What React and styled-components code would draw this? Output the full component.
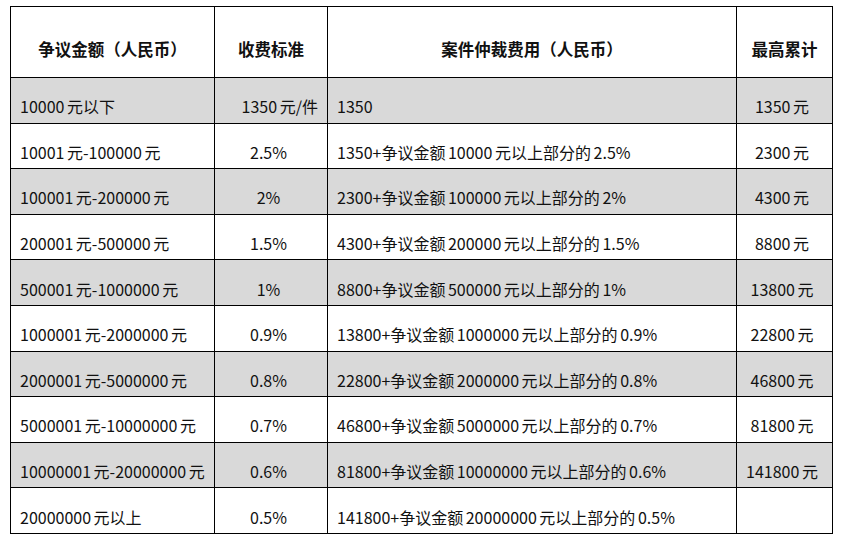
import React from "react";
import styled, { createGlobalStyle } from "styled-components";

const Global = createGlobalStyle`
  html, body { margin: 0; padding: 0; background: #ffffff; }
  body { font-family: "Noto Sans CJK SC", "Noto Sans", sans-serif; color: #111; }
`;

const Page = styled.div`
  padding: 6px 0 0 10px;
`;

const Table = styled.table`
  border-collapse: collapse;
  table-layout: fixed;
  width: 822px;
  font-size: 16px;
  line-height: 20px;
`;

const HeadRow = styled.tr`
  height: 71px;
`;

const Row = styled.tr`
  height: 45.6px;
  background: ${(p) => (p.$shaded ? "#d9d9d9" : "#ffffff")};
`;

const Th = styled.th`
  border: 1px solid #000;
  font-weight: 700;
  font-size: 16.5px;
  text-align: center;
  padding: 13px 4px 0;
  vertical-align: middle;
  white-space: nowrap;
`;

const Td = styled.td`
  border: 1px solid #000;
  font-weight: 400;
  word-spacing: -1px;
  text-align: ${(p) => p.$align || "left"};
  padding: 12px ${(p) => (p.$align === "left" ? "4px" : "9px")} 0
    ${(p) => (p.$align === "left" ? "9px" : "4px")};
  vertical-align: middle;
  white-space: nowrap;
`;

const rows = [
  ["10000 元以下", "1350 元/件", "1350", "1350 元", "right"],
  ["10001 元-100000 元", "2.5%", "1350+争议金额 10000 元以上部分的 2.5%", "2300 元"],
  ["100001 元-200000 元", "2%", "2300+争议金额 100000 元以上部分的 2%", "4300 元"],
  ["200001 元-500000 元", "1.5%", "4300+争议金额 200000 元以上部分的 1.5%", "8800 元"],
  ["500001 元-1000000 元", "1%", "8800+争议金额 500000 元以上部分的 1%", "13800 元"],
  ["1000001 元-2000000 元", "0.9%", "13800+争议金额 1000000 元以上部分的 0.9%", "22800 元"],
  ["2000001 元-5000000 元", "0.8%", "22800+争议金额 2000000 元以上部分的 0.8%", "46800 元"],
  ["5000001 元-10000000 元", "0.7%", "46800+争议金额 5000000 元以上部分的 0.7%", "81800 元"],
  ["10000001 元-20000000 元", "0.6%", "81800+争议金额 10000000 元以上部分的 0.6%", "141800 元"],
  ["20000000 元以上", "0.5%", "141800+争议金额 20000000 元以上部分的 0.5%", ""],
];

export default function App() {
  return (
    <Page>
      <Global />
      <Table>
        <colgroup>
          <col style={{ width: 204 }} />
          <col style={{ width: 113 }} />
          <col style={{ width: 409 }} />
          <col style={{ width: 96 }} />
        </colgroup>
        <thead>
          <HeadRow>
            <Th>争议金额（人民币）</Th>
            <Th>收费标准</Th>
            <Th>案件仲裁费用（人民币）</Th>
            <Th>最高累计</Th>
          </HeadRow>
        </thead>
        <tbody>
          {rows.map((r, i) => (
            <Row key={i} $shaded={i % 2 === 0}>
              <Td $align="left">{r[0]}</Td>
              <Td $align={r[4] || "center"}>{r[1]}</Td>
              <Td $align="left">{r[2]}</Td>
              <Td $align="center">{r[3]}</Td>
            </Row>
          ))}
        </tbody>
      </Table>
    </Page>
  );
}
